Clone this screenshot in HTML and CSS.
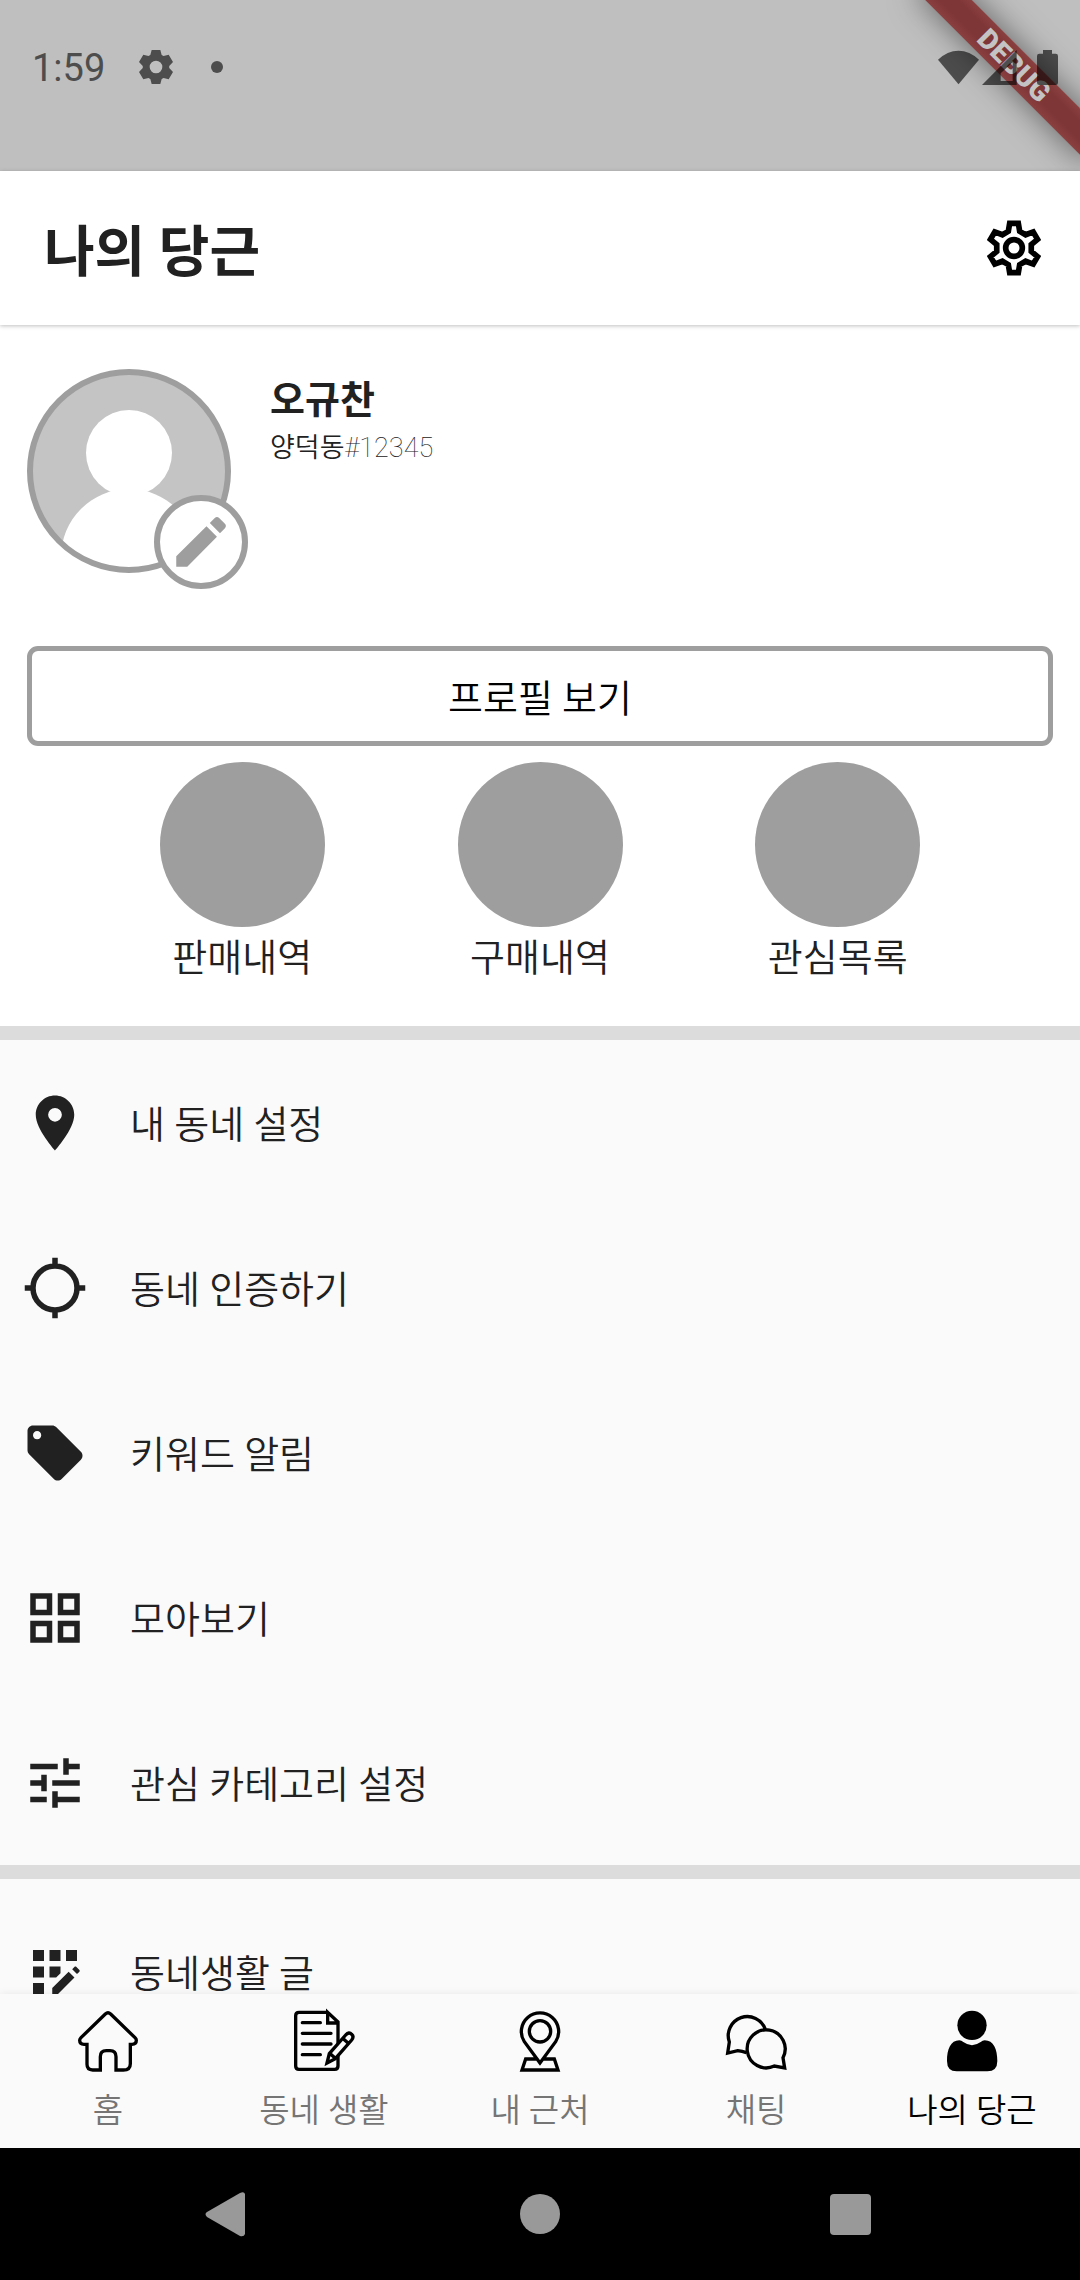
FILE: index.html
```html
<!DOCTYPE html>
<html lang="ko">
<head>
<meta charset="utf-8">
<meta name="viewport" content="width=device-width, initial-scale=1">
<title>나의 당근</title>
<link rel="stylesheet" href="styles.css">
</head>
<body>
<div class="app">
  <div class="status-bar">
    <div class="debug-banner">DEBUG</div>
    <div class="status-group status-left">
      <span class="clock">1:59</span>
      <svg class="status-gear" viewBox="-54 -54 108 108" aria-hidden="true"><path fill-rule="evenodd" stroke-linejoin="round" d="M-17-36-13-51H13L17-36 22.700-32.700 38-37 51-15 39.700-3.300V3.300L51 15 38 37 22.700 32.700 17 36 13 51H-13L-17 36-22.700 32.700-38 37-51 15-39.700 3.300V-3.300L-51-15-38-37-22.700-32.700ZM0-19A19 19 0 1 0 0 19 19 19 0 1 0 0-19Z"/></svg>
      <span class="status-dot"></span>
    </div>
    <div class="status-group status-right">
      <svg class="status-wifi" viewBox="0 0 123 105" aria-hidden="true"><path d="M0 29Q28 2 61.500 2T123 29L61.500 103Z"/></svg>
      <svg class="status-signal" viewBox="0 0 105 105" aria-hidden="true"><path fill-rule="evenodd" d="M0 105 104 0V105ZM56 93H92V37L56 70Z"/></svg>
      <svg class="status-battery" viewBox="0 0 63 105" aria-hidden="true"><path d="M18 0H45V11H56Q63 11 63 18V98Q63 105 56 105H7Q0 105 0 98V18Q0 11 7 11H18Z"/></svg>
    </div>
  </div>

  <header class="app-bar">
    <h1 class="title">나의 당근</h1>
    <button class="icon-button" type="button" aria-label="설정">
      <svg class="icon" viewBox="-99 -99 198 198" aria-hidden="true"><g fill="none" stroke="currentColor"><path stroke-width="17" stroke-linejoin="miter" d="M-17-50-13-74H13L17-50 34.800-39.700 57.600-48.300 70.600-25.700 51.800-10.300V10.300L70.600 25.700 57.600 48.300 34.800 39.700 17 50 13 74H-13L-17 50-34.800 39.700-57.600 48.300-70.600 25.700-51.800 10.300V-10.300L-70.600-25.700-57.600-48.300-34.800-39.700Z"/><circle r="25" stroke-width="17"/></g></svg>
    </button>
  </header>

  <main class="content">
    <section class="profile">
      <div class="profile-head">
        <div class="avatar-wrap">
          <svg class="avatar" viewBox="0 0 204 204" role="img" aria-label="프로필 사진">
            <defs><clipPath id="face"><circle cx="102" cy="102" r="98"/></clipPath></defs>
            <g clip-path="url(#face)"><rect width="204" height="204" fill="#c4c4c4"/><g fill="#fff"><circle cx="102" cy="84" r="43"/><circle cx="102" cy="188" r="68"/></g></g>
            <circle cx="102" cy="102" r="99" fill="none" stroke="#9e9e9e" stroke-width="6"/>
          </svg>
          <button class="edit-badge" type="button" aria-label="프로필 수정">
            <svg class="icon" viewBox="0 0 24 24" aria-hidden="true"><path d="M3 17.200V21H7L17.800 10.100 14 6.300ZM15.200 5.100 17 3.300Q17.800 2.600 18.600 3.300L20.700 5.400Q21.400 6.200 20.700 7L18.900 8.800Z"/></svg>
          </button>
        </div>
        <div class="profile-text">
          <h2 class="name">오규찬</h2>
          <p class="region">양덕동<span class="user-id">#12345</span></p>
        </div>
      </div>
      <button class="profile-button" type="button">프로필 보기</button>
      <div class="shortcuts">
        <a class="shortcut" href="#sales"><span class="disc"></span>판매내역</a>
        <a class="shortcut" href="#purchases"><span class="disc"></span>구매내역</a>
        <a class="shortcut" href="#favorites"><span class="disc"></span>관심목록</a>
      </div>
    </section>

    <ul class="menu">
      <li><a class="menu-row" href="#town"><svg class="icon" viewBox="0 0 24 24" aria-hidden="true"><path d="M12 2C8.130 2 5 5.130 5 9c0 5.250 7 13 7 13s7-7.750 7-13c0-3.870-3.130-7-7-7zm0 9.500a2.500 2.500 0 1 1 0-5 2.500 2.500 0 0 1 0 5z"/></svg><span class="menu-label">내 동네 설정</span></a></li>
      <li><a class="menu-row" href="#verify"><svg class="icon" viewBox="0 0 24 24" aria-hidden="true"><path fill="none" stroke="currentColor" stroke-width="2" d="M12 4a8 8 0 1 0 0 16 8 8 0 1 0 0-16ZM12 1V4M12 20V23M1 12H4M20 12H23"/></svg><span class="menu-label">동네 인증하기</span></a></li>
      <li><a class="menu-row" href="#keywords"><svg class="icon" viewBox="0 0 24 24" aria-hidden="true"><path d="M21.410 11.580l-9-9C12.050 2.220 11.550 2 11 2H4c-1.100 0-2 .9-2 2v7c0 .55.22 1.050.59 1.420l9 9c.36.36.86.58 1.410.58.55 0 1.050-.22 1.410-.59l7-7c.37-.36.59-.86.59-1.410 0-.55-.23-1.060-.59-1.420zM5.500 7C4.670 7 4 6.330 4 5.500S4.670 4 5.500 4 7 4.670 7 5.500 6.330 7 5.500 7z"/></svg><span class="menu-label">키워드 알림</span></a></li>
      <li><a class="menu-row" href="#collection"><svg class="icon" viewBox="0 0 24 24" aria-hidden="true"><path d="M3 3v8h8V3H3zm6 6H5V5h4v4zm-6 4v8h8v-8H3zm6 6H5v-4h4v4zm4-16v8h8V3h-8zm6 6h-4V5h4v4zm-6 4v8h8v-8h-8zm6 6h-4v-4h4v4z"/></svg><span class="menu-label">모아보기</span></a></li>
      <li><a class="menu-row" href="#categories"><svg class="icon" viewBox="0 0 24 24" aria-hidden="true"><path d="M3 17v2h6v-2H3zM3 5v2h10V5H3zm10 16v-2h8v-2h-8v-2h-2v6h2zM7 9v2H3v2h4v2h2V9H7zm14 4v-2H11v2h10zm-6-4h2V7h4V5h-4V3h-2v6z"/></svg><span class="menu-label">관심 카테고리 설정</span></a></li>
    </ul>

    <ul class="menu menu-spaced">
      <li><a class="menu-row" href="#posts"><svg class="icon" viewBox="0 0 24 24" aria-hidden="true"><path d="M10 4h4v4h-4zM4 16h4v4H4zM4 10h4v4H4zM4 4h4v4H4zM16 4h4v4h-4zM11 17.860V20h2.100l5.980-5.970-2.120-2.120zM14 12.420V10h-4v4h2.420zM20.880 11.290l-1.170-1.170c-.16-.16-.42-.16-.58 0l-.88.88L20 12.750l.88-.88c.16-.16.16-.42 0-.58z"/></svg><span class="menu-label">동네생활 글</span></a></li>
    </ul>
  </main>

  <nav class="tabs">
    <a class="tab" href="#home">
      <svg class="tab-icon" viewBox="0 0 180 180" aria-hidden="true"><path d="M27 100V160Q27 177 44 177H67V137Q67 119 85 119H96Q114 119 114 137V177H136Q157 177 157 158V100H162Q175 100 175 88 175 84 171 80L98 9Q90 2 82 9L9 80Q5 84 5 88 5 100 18 100Z"/></svg>
      홈
    </a>
    <a class="tab" href="#life">
      <svg class="tab-icon" viewBox="0 0 180 180" aria-hidden="true"><path d="M101 4H15Q5 4 5 14V165Q5 175 15 175H122Q132 175 132 165V33L101 4V36H132"/><path stroke-linecap="round" d="M25 35H79M25 67H111M25 99H111M25 131H79"/><path fill="#fafafa" d="M99 156 106 128 155 72Q165 61 173 70 181 77 173 87L124 143ZM107 127 124 142M146 82 163 97"/></svg>
      동네 생활
    </a>
    <a class="tab" href="#nearby">
      <svg class="tab-icon" viewBox="0 0 180 180" aria-hidden="true"><path d="M81 144H47L36 177H144L133 144H99M90 156 43 92A56 56 0 1 1 137 92Z"/><circle cx="90" cy="61" r="32"/></svg>
      내 근처
    </a>
    <a class="tab" href="#chat">
      <svg class="tab-icon" viewBox="0 0 180 180" aria-hidden="true"><path d="M118 55A57 57 0 1 0 10 93L5 126 35 119Q49 121 61 125M171 140 176 171 145 165A57 57 0 1 1 171 140Z"/></svg>
      채팅
    </a>
    <a class="tab tab-active" href="#me" aria-current="page">
      <svg class="tab-icon tab-icon-solid" viewBox="0 0 180 180" aria-hidden="true"><circle cx="90" cy="43" r="44"/><path d="M52 88Q58 88 64 93 90 112 116 93 122 88 128 88C155 88 166 115 166 150Q166 181 136 181H44Q15 181 15 150C15 115 26 88 52 88Z"/></svg>
      나의 당근
    </a>
  </nav>

  <div class="system-nav">
    <button class="system-button" type="button" aria-label="뒤로"><svg class="icon" viewBox="0 0 66 66" aria-hidden="true"><path d="M12 31Q9 33 12 36L45 55Q49 56 50 53V13Q49 10 45 12Z"/></svg></button>
    <button class="system-button" type="button" aria-label="홈 화면"><svg class="icon" viewBox="0 0 66 66" aria-hidden="true"><circle cx="33" cy="33" r="20"/></svg></button>
    <button class="system-button" type="button" aria-label="최근 앱"><svg class="icon" viewBox="0 0 66 66" aria-hidden="true"><rect x="11" y="13" width="41" height="41" rx="4"/></svg></button>
  </div>
</div>
</body>
</html>
```

FILE: styles.css
```css
* {
  box-sizing: border-box;
}

body {
  margin: 0;
  background: #fafafa;
  color: #212121;
  font-family: Roboto, "Noto Sans CJK KR", sans-serif;
  font-size: 38px;
  font-weight: 350;
  line-height: 56px;
}

h1, h2, p, ul {
  margin: 0;
  padding: 0;
}

ul {
  list-style: none;
}

a {
  color: inherit;
  text-decoration: none;
}

button {
  padding: 0;
  border: 0;
  background: none;
  font: inherit;
}

svg {
  display: block;
  fill: currentColor;
}

.icon {
  width: 66px;
  height: 66px;
}

.app {
  display: flex;
  flex-direction: column;
  height: 100vh;
}

/* Status bar */
.status-bar {
  position: relative;
  display: flex;
  flex: none;
  justify-content: space-between;
  height: 171px;
  padding: 39px 22px 0 32px;
  overflow: hidden;
  background: #bfbfbf;
  color: #4d4d4d;
}

.status-group {
  position: relative;
  display: flex;
  align-items: center;
  height: 56px;
}

.status-left {
  gap: 33px;
}

.clock {
  padding-top: 2px;
  font-weight: 400;
}

.status-gear {
  width: 36px;
  height: 36px;
}

.status-dot {
  width: 12px;
  height: 12px;
  margin-left: 4px;
  border-radius: 50%;
  background: currentColor;
}

.status-right {
  color: rgba(0, 0, 0, 0.6);
}

.status-wifi {
  width: 41px;
  height: 35px;
}

.status-signal {
  width: 35px;
  height: 35px;
  margin-left: 3px;
}

.status-battery {
  width: 21px;
  height: 35px;
  margin-left: 20px;
}

.debug-banner {
  position: absolute;
  top: 49px;
  right: -54px;
  width: 240px;
  height: 33px;
  transform: rotate(45deg);
  background: linear-gradient(#8b4040, #7f3636 30%, #7f3636 70%, #8b4040);
  box-shadow: 0 0 32px rgba(0, 0, 0, 0.5);
  color: #c4c4c4;
  font-size: 28px;
  font-weight: 900;
  line-height: 33px;
  text-align: center;
}

/* App bar */
.app-bar {
  z-index: 1;
  display: flex;
  flex: none;
  align-items: center;
  justify-content: space-between;
  height: 154px;
  padding: 0 33px 0 44px;
  background: #fff;
  box-shadow: 0 1px 4px rgba(0, 0, 0, 0.25);
}

.title {
  padding-top: 8px;
  font-size: 55px;
  font-weight: 700;
  line-height: 80px;
}

.icon-button {
  color: #000;
}

/* Profile */
.content {
  flex: 1;
  min-height: 0;
  overflow-y: auto;
  scrollbar-width: none;
}

.profile {
  padding: 44px 27px 40px;
  background: #fff;
}

.profile-head {
  display: flex;
  gap: 22px;
}

.profile-text {
  padding-top: 3px;
}

.avatar-wrap {
  position: relative;
  width: 221px;
  height: 220px;
}

.avatar {
  width: 204px;
  height: 204px;
}

.edit-badge {
  position: absolute;
  right: 0;
  bottom: 0;
  display: grid;
  place-items: center;
  width: 94px;
  height: 94px;
  border: 6px solid #9e9e9e;
  border-radius: 50%;
  background: #fff;
  color: #9e9e9e;
}

.name {
  font-size: 38px;
  font-weight: 700;
  line-height: 56px;
}

.region {
  font-size: 27px;
  line-height: 40px;
}

.user-id {
  font-weight: 100;
}

.profile-button {
  display: block;
  width: 100%;
  height: 100px;
  margin-top: 57px;
  padding-top: 6px;
  border: 5px solid #9e9e9e;
  border-radius: 11px;
  color: #000;
}

.shortcuts {
  display: flex;
  justify-content: space-evenly;
  margin-top: 16px;
}

.shortcut {
  display: flex;
  flex-direction: column;
  align-items: center;
  gap: 3px;
}

.disc {
  width: 165px;
  height: 165px;
  border-radius: 50%;
  background: #9e9e9e;
}

/* Menu */
.menu {
  border-top: 14px solid #dcdcdc;
}

.menu-spaced {
  padding-top: 10px;
}

.menu-row {
  display: flex;
  align-items: center;
  gap: 42px;
  height: 165px;
  padding: 0 22px;
}

.menu-label {
  padding-top: 4px;
}

/* Bottom tabs */
.tabs {
  z-index: 1;
  display: grid;
  flex: none;
  grid-template-columns: repeat(5, 1fr);
  height: 154px;
  padding-top: 17px;
  background: #fafafa;
  box-shadow: 0 0 8px rgba(0, 0, 0, 0.08);
}

.tab {
  display: flex;
  flex-direction: column;
  align-items: center;
  gap: 16px;
  color: #757575;
  font-size: 33px;
  line-height: 48px;
}

.tab-active {
  color: #000;
}

.tab-icon {
  width: 60px;
  height: 60px;
  overflow: visible;
  fill: none;
  stroke: #000;
  stroke-width: 10;
}

.tab-icon-solid {
  fill: #000;
  stroke: none;
}

/* System navigation */
.system-nav {
  display: flex;
  flex: none;
  align-items: center;
  justify-content: center;
  gap: 246px;
  height: 132px;
  background: #000;
}

.system-button {
  color: #999;
}
```
